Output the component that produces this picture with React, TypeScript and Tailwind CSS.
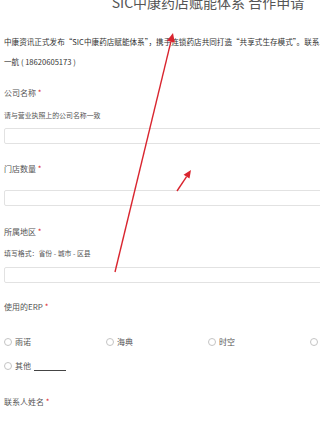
import React from "react";

const Label = ({ text, className = "" }: { text: string; className?: string }) => (
  <div className={`h-[14px] leading-[14px] text-[8px] text-[#555] ${className}`}>
    {text} <span className="text-[#e0252b]">*</span>
  </div>
);

const Input = ({ className = "" }: { className?: string }) => (
  <div className={`h-[16px] w-full border border-[#e2e2e2] rounded-[2px] bg-white ${className}`} />
);

const Radio = ({ text }: { text: string }) => (
  <div className="flex items-center gap-[3px] h-[14px]">
    <span className="w-[8px] h-[8px] rounded-full border border-[#c4c4c4] bg-white" />
    <span className="text-[8px] text-[#555]">{text}</span>
  </div>
);

const App = () => {
  return (
    <div
      className="relative w-[320px] h-[423px] overflow-hidden bg-white"
      style={{ fontFamily: '"Noto Sans CJK SC", "Noto Sans", sans-serif' }}
    >
      <div className="w-[416px] px-[4px]">
        <div className="mt-[-8px] h-[20px] leading-[20px] text-center text-[14px] text-[#555]">
          SIC中康药店赋能体系 合作申请
        </div>

        <div className="mt-[20px] text-[7.6px] leading-[20px] text-[#333] whitespace-nowrap">
          <div>中康资讯正式发布“SIC中康药店赋能体系”，携手连锁药店共同打造“共享式生存模式”。联系人：王</div>
          <div>一航 ( 18620605173 )</div>
        </div>

        <Label text="公司名称" className="mt-[14px]" />
        <div className="mt-[9px] h-[12px] leading-[12px] text-[6.9px] text-[#555]">
          请与营业执照上的公司名称一致
        </div>
        <Input className="mt-[7px]" />

        <Label text="门店数量" className="mt-[18px]" />
        <Input className="mt-[14px]" />

        <Label text="所属地区" className="mt-[19px]" />
        <div className="mt-[8px] h-[12px] leading-[12px] text-[6.9px] text-[#555]">
          填写格式：省份 - 城市 - 区县
        </div>
        <Input className="mt-[8px]" />

        <Label text="使用的ERP" className="mt-[17px]" />
        <div className="mt-[21px] grid grid-cols-4">
          <Radio text="雨诺" />
          <Radio text="海典" />
          <Radio text="时空" />
          <Radio text="其他系统" />
        </div>
        <div className="mt-[10px] flex items-center gap-[3px] h-[14px]">
          <span className="w-[8px] h-[8px] rounded-full border border-[#c4c4c4] bg-white" />
          <span className="text-[8px] text-[#555]">其他</span>
          <span className="w-[32px] h-[9px] border-b border-[#444]" />
        </div>

        <Label text="联系人姓名" className="mt-[22px]" />
      </div>

      <svg className="absolute top-0 left-0 pointer-events-none" width="320" height="423" viewBox="0 0 320 423">
        <line x1="115" y1="272" x2="170.9" y2="41.7" stroke="#d9252f" strokeWidth="1.4" />
        <polygon points="173,33 174.8,42.7 167,40.8" fill="#d9252f" />
        <line x1="177" y1="191" x2="186.6" y2="176.7" stroke="#d9252f" strokeWidth="1.4" />
        <polygon points="191,170 189.5,178.6 183.6,174.7" fill="#d9252f" />
      </svg>
    </div>
  );
};

export default App;
